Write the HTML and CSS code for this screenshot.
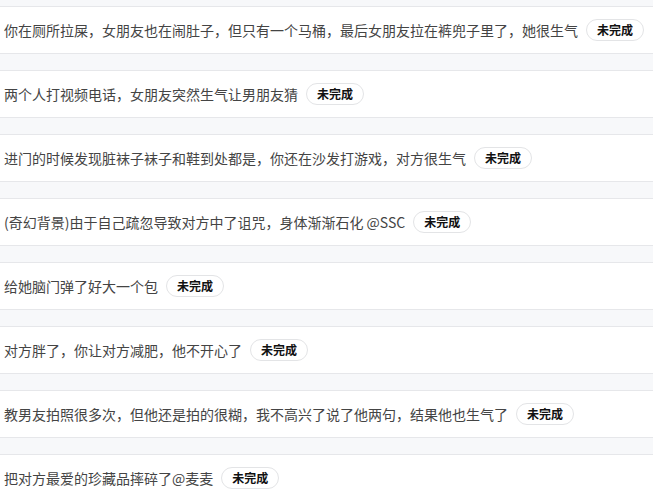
FILE: index.html
```html
<!DOCTYPE html>
<html lang="zh">
<head>
    <meta charset="UTF-8">
    <title>任务列表</title>
    <link rel="stylesheet" href="styles.css">
</head>
<body>
<div id="task-list">
    <div class="task-item">
        <span class="task-text">你在厕所拉屎，女朋友也在闹肚子，但只有一个马桶，最后女朋友拉在裤兜子里了，她很生气</span>
        <span class="status-tag">未完成</span>
    </div>
    <div class="task-item">
        <span class="task-text">两个人打视频电话，女朋友突然生气让男朋友猜</span>
        <span class="status-tag">未完成</span>
    </div>
    <div class="task-item">
        <span class="task-text">进门的时候发现脏袜子袜子和鞋到处都是，你还在沙发打游戏，对方很生气</span>
        <span class="status-tag">未完成</span>
    </div>
    <div class="task-item">
        <span class="task-text">(奇幻背景)由于自己疏忽导致对方中了诅咒，身体渐渐石化 @SSC</span>
        <span class="status-tag">未完成</span>
    </div>
    <div class="task-item">
        <span class="task-text">给她脑门弹了好大一个包</span>
        <span class="status-tag">未完成</span>
    </div>
    <div class="task-item">
        <span class="task-text">对方胖了，你让对方减肥，他不开心了</span>
        <span class="status-tag">未完成</span>
    </div>
    <div class="task-item">
        <span class="task-text">教男友拍照很多次，但他还是拍的很糊，我不高兴了说了他两句，结果他也生气了</span>
        <span class="status-tag">未完成</span>
    </div>
    <div class="task-item">
        <span class="task-text">把对方最爱的珍藏品摔碎了@麦麦</span>
        <span class="status-tag">未完成</span>
    </div>
</div>
</body>
</html>
```

FILE: styles.css
```css
body {
    margin: 0;
    padding-top: 6px;
    background-color: #f7f8fa;
    font-family: "Noto Sans CJK SC", "Noto Sans", sans-serif;
}

.task-item {
    display: flex;
    align-items: center;
    height: 46px;
    padding: 0 4px;
    margin-bottom: 16px;
    background-color: #fff;
    border-top: 1px solid #e6e7ea;
    border-bottom: 1px solid #e6e7ea;
    white-space: nowrap;
}

.task-text {
    font-size: 14px;
    line-height: 20px;
    color: #444;
}

/* status pill */
.status-tag {
    margin-left: 8px;
    padding: 0 10px;
    height: 20px;
    line-height: 20px;
    border: 1px solid #e3e4e6;
    border-radius: 11px;
    font-size: 12px;
    font-weight: bold;
    color: #111;
}
```
